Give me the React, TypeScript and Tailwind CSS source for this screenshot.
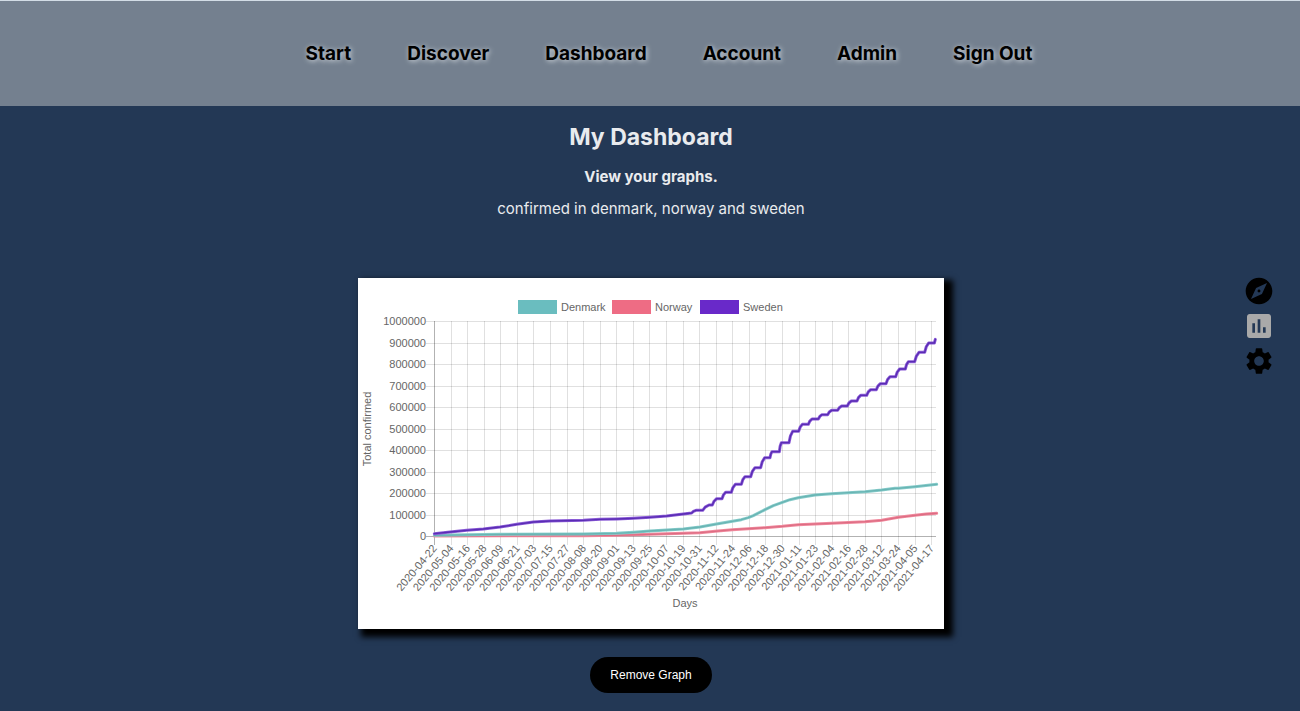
import React from "react";
import { MdAssessment, MdExplore, MdSettings } from "react-icons/md";

const navItems = ["Start", "Discover", "Dashboard", "Account", "Admin", "Sign Out"];

const yLabels = [1000000, 900000, 800000, 700000, 600000, 500000, 400000, 300000, 200000, 100000, 0];

const xLabels = [
  "2020-04-22", "2020-05-04", "2020-05-16", "2020-05-28", "2020-06-09", "2020-06-21",
  "2020-07-03", "2020-07-15", "2020-07-27", "2020-08-08", "2020-08-20", "2020-09-01",
  "2020-09-13", "2020-09-25", "2020-10-07", "2020-10-19", "2020-10-31", "2020-11-12",
  "2020-11-24", "2020-12-06", "2020-12-18", "2020-12-30", "2021-01-11", "2021-01-23",
  "2021-02-04", "2021-02-16", "2021-02-28", "2021-03-12", "2021-03-24", "2021-04-05",
  "2021-04-17",
];

// Series points are kept in thirds of a chart unit.
const denmark: number[][] = [
  [229, 772], [426, 769], [676, 768], [776, 766], [826, 763], [876, 759], [926, 756], [976, 753],
  [1026, 747], [1071, 739], [1123, 730], [1150, 725], [1171, 719], [1186, 713], [1221, 695],
  [1246, 683], [1273, 673], [1296, 665], [1321, 659], [1371, 651], [1421, 647], [1521, 641],
  [1571, 636], [1611, 631], [1621, 631], [1671, 626], [1736, 619],
];

const norway: number[][] = [
  [229, 774], [676, 773], [776, 772], [876, 769], [976, 766], [1026, 764], [1071, 760],
  [1123, 755], [1221, 749], [1273, 745], [1321, 740], [1421, 736], [1521, 731], [1571, 727],
  [1621, 718], [1671, 712], [1705, 708], [1736, 706],
];

const swedenStart: number[][] = [
  [229, 767], [276, 762], [326, 757], [376, 753], [426, 747], [476, 739], [526, 732], [576, 729],
  [676, 727], [726, 724], [776, 723], [826, 721], [876, 718], [926, 714], [976, 708], [1001, 705],
];

// Weekly plateaus: start, end, height.
const swedenWeeks: number[][] = [
  [1014, 1034, 697], [1053, 1063, 681], [1076, 1092, 662], [1103, 1120, 643], [1132, 1150, 619],
  [1161, 1178, 596], [1191, 1208, 569], [1220, 1236, 539], [1242, 1264, 521], [1270, 1293, 494],
  [1304, 1322, 460], [1333, 1351, 439], [1362, 1381, 423], [1392, 1409, 410], [1421, 1439, 397],
  [1451, 1468, 384], [1480, 1497, 369], [1508, 1526, 352], [1538, 1555, 335], [1567, 1584, 317],
  [1596, 1613, 296], [1625, 1642, 273], [1651, 1670, 251], [1683, 1700, 223], [1712, 1729, 195],
];

const sweden: number[][] = [...swedenStart];
swedenWeeks.forEach(([from, to, y]) => {
  const [px, py] = sweden[sweden.length - 1];
  sweden.push([px + (from - px) * 0.4, py + (y - py) * 0.6], [from, y], [to, y]);
});
sweden.push([1732, 184]);

const toPoints = (data: number[][]) => data.map(([x, y]) => `${x / 3},${y / 3}`).join(" ");

const series = [
  { name: "Norway", data: norway, edge: "#f08a9d", core: "#dd6c83" },
  { name: "Denmark", data: denmark, edge: "#86cbca", core: "#68b4b3" },
  { name: "Sweden", data: sweden, edge: "#8a5bd6", core: "#5a2cb4" },
];

const legend = [
  { name: "Denmark", color: "#6abdbf", x: 160 },
  { name: "Norway", color: "#ee6c84", x: 254 },
  { name: "Sweden", color: "#6929c9", x: 342 },
];

function Chart() {
  return (
    <svg
      viewBox="0 0 586 351"
      role="img"
      aria-label="Total confirmed by day"
      className="block w-full fill-[#666] font-['Liberation_Sans',Arial,sans-serif] text-[11px]"
    >
      {legend.map((item) => (
        <g key={item.name}>
          <rect x={item.x} y="22" width="39" height="14" fill={item.color} />
          <text x={item.x + 43} y="33">{item.name}</text>
        </g>
      ))}

      <g stroke="#000" strokeOpacity="0.12" shapeRendering="crispEdges">
        {xLabels.slice(1).map((label, i) => (
          <line key={label} x1={76.5 + (i + 1) * 16.57} x2={76.5 + (i + 1) * 16.57} y1="43" y2="267" />
        ))}
        {yLabels.slice(0, -1).map((label, i) => (
          <line key={label} x1="68" x2="578" y1={43.5 + i * 21.53} y2={43.5 + i * 21.53} />
        ))}
      </g>
      <g stroke="#000" strokeOpacity="0.3" shapeRendering="crispEdges">
        <line x1="76.5" x2="76.5" y1="43" y2="267" />
        <line x1="68" x2="578" y1="258.5" y2="258.5" />
      </g>

      {yLabels.map((label, i) => (
        <text key={label} x="68" y={47 + i * 21.53} textAnchor="end">{label}</text>
      ))}
      {xLabels.map((label, i) => (
        <text
          key={label}
          dy="4"
          textAnchor="end"
          transform={`translate(${76.5 + i * 16.57} 268) rotate(-50)`}
        >
          {label}
        </text>
      ))}

      {series.map((s) => (
        <g key={s.name} fill="none" strokeLinejoin="round" strokeLinecap="round">
          <polyline points={toPoints(s.data)} stroke={s.edge} strokeWidth="3" />
          <polyline points={toPoints(s.data)} stroke={s.core} strokeWidth="1.4" />
        </g>
      ))}

      <text x="327" y="329" textAnchor="middle">Days</text>
      <text transform="translate(13 151) rotate(-90)" textAnchor="middle">Total confirmed</text>
    </svg>
  );
}

export default function App() {
  return (
    <div className="min-h-screen bg-[#233855] pb-4 font-[Inter,'Open_Sans',sans-serif] text-[#e9ebee]">
      <header className="border-t border-[#d3dde6] bg-[#74808f]">
        <nav aria-label="Main" className="flex h-[105px] items-center justify-center gap-14 pt-0.5 pl-[38px]">
          {navItems.map((item) => (
            <a
              key={item}
              href="#"
              className="text-[19px] font-bold text-black [text-shadow:1px_1px_5px_#d8dde2]"
            >
              {item}
            </a>
          ))}
        </nav>
      </header>

      <main className="flex flex-col items-center pr-4 pl-[18px] text-center">
        <h1 className="mt-[15px] text-[23px] leading-8 font-bold">My Dashboard</h1>
        <h2 className="mt-3 text-[15px] leading-6 font-bold">View your graphs.</h2>
        <p className="mt-2 text-[15px] leading-6">confirmed in denmark, norway and sweden</p>

        <div className="mt-[57px] w-full max-w-[586px] bg-white shadow-[6px_5px_6px_3px_#000]">
          <Chart />
        </div>

        <button
          type="button"
          className="mt-7 h-9 rounded-full bg-black px-5 font-['Liberation_Sans',Arial,sans-serif] text-xs text-white"
        >
          Remove Graph
        </button>
      </main>

      <nav aria-label="Shortcuts" className="fixed top-[275px] right-[25px] flex flex-col gap-[3px] text-black">
        <a href="#" aria-label="Discover"><MdExplore size={32} /></a>
        <a href="#" aria-label="Dashboard" className="text-[#a9a9a9]"><MdAssessment size={32} /></a>
        <a href="#" aria-label="Settings"><MdSettings size={32} /></a>
      </nav>
    </div>
  );
}
